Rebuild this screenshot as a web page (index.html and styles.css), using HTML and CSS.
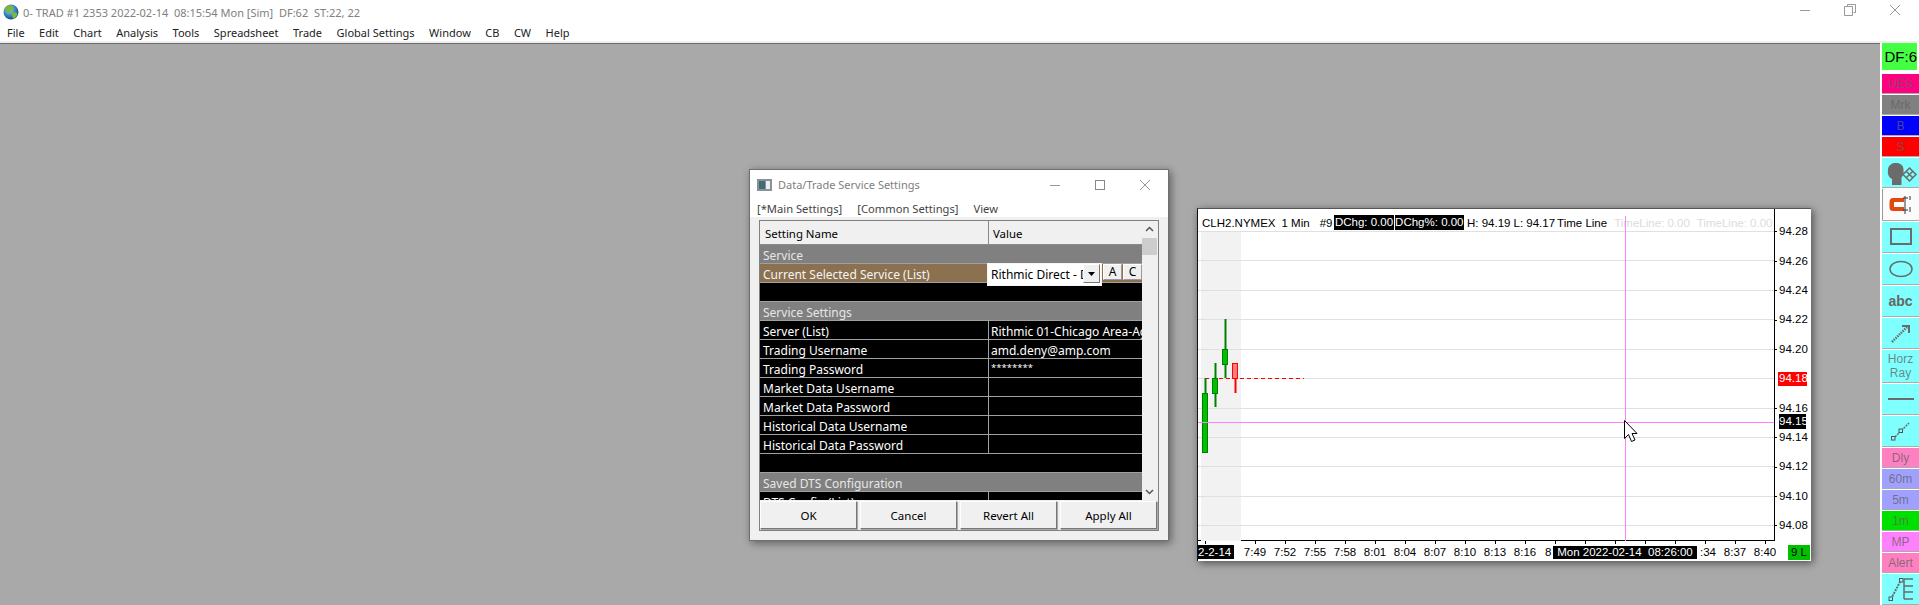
FILE: index.html
```html
<!DOCTYPE html>
<html lang="en">
<head>
<meta charset="utf-8">
<title>Sierra Chart</title>
<link rel="stylesheet" href="styles.css">
</head>
<body>
<div class="app">
  <header class="topbar">
    <div class="titlebar">
      <svg class="globe" viewBox="0 0 16 16" width="16" height="16">
        <defs><radialGradient id="gl" cx="40%" cy="35%" r="70%"><stop offset="0" stop-color="#9fd8f0"/><stop offset=".6" stop-color="#2f7fc0"/><stop offset="1" stop-color="#123f78"/></radialGradient></defs>
        <circle cx="8" cy="8" r="7.5" fill="url(#gl)"/>
        <path d="M4 2 C6 1 10 1.500 11 3.500 C11 5.500 8 6 7.500 8.500 C6.500 10 4 9 2.500 7 C2 5 2.500 3.500 4 2Z M9 9 C11 8 14 8 14.500 10 C13.500 12.500 12 14.500 10 15 C9.500 12.500 8.500 11 9 9Z" fill="#7db63c"/>
      </svg>
      <span class="title-text">0- TRAD #1 2353 2022-02-14&nbsp; 08:15:54 Mon [Sim]&nbsp; DF:62&nbsp; ST:22, 22</span>
      <div class="win-controls">
        <svg width="12" height="12" viewBox="0 0 12 12"><path d="M1 6.500H11" stroke="#999" fill="none"/></svg>
        <svg width="12" height="12" viewBox="0 0 12 12"><path d="M3.500 2.500V.5H11.500V8.500H9.500M.5 2.500H8.500V11.500H.5Z" stroke="#999" fill="none"/></svg>
        <svg width="12" height="12" viewBox="0 0 12 12"><path d="M1 1L11 11M11 1L1 11" stroke="#999" fill="none"/></svg>
      </div>
    </div>
    <nav class="menubar">
      <span>File</span><span>Edit</span><span>Chart</span><span>Analysis</span><span>Tools</span><span>Spreadsheet</span><span>Trade</span><span>Global Settings</span><span>Window</span><span>CB</span><span>CW</span><span>Help</span>
    </nav>
  </header>

  <main class="workspace">
    <section class="dialog">
      <div class="dlg-title">
        <svg class="dlg-icon" width="15" height="12" viewBox="0 0 15 12"><rect width="15" height="12" fill="#8a9096"/><rect x="2" y="2" width="6" height="8" fill="#3d6b78"/><rect x="9" y="2" width="4" height="8" fill="#e8eef2"/></svg>
        <span class="dlg-title-text">Data/Trade Service Settings</span>
        <div class="dlg-controls">
          <svg width="12" height="12" viewBox="0 0 12 12"><path d="M1 6.500H11" stroke="#999" fill="none"/></svg>
          <svg width="12" height="12" viewBox="0 0 12 12"><rect x="1.500" y="1.500" width="9" height="9" stroke="#888" fill="none"/></svg>
          <svg width="12" height="12" viewBox="0 0 12 12"><path d="M1 1L11 11M11 1L1 11" stroke="#999" fill="none"/></svg>
        </div>
      </div>
      <div class="dlg-menu"><span>[*Main Settings]</span><span>[Common Settings]</span><span>View</span></div>
      <div class="dlg-body">
        <div class="panel">
          <div class="panel-top">
            <div class="grid">
              <div class="row head"><span>Setting Name</span><span>Value</span></div>
              <div class="rows">
                <div class="row section"><span>Service</span></div>
                <div class="row current"><span>Current Selected Service (List)</span></div>
                <div class="row blank"></div>
                <div class="row section"><span>Service Settings</span></div>
                <div class="row"><span>Server (List)</span><span>Rithmic 01-Chicago Area-Agg</span></div>
                <div class="row"><span>Trading Username</span><span>amd.deny@amp.com</span></div>
                <div class="row"><span>Trading Password</span><span class="mask">********</span></div>
                <div class="row"><span>Market Data Username</span><span></span></div>
                <div class="row"><span>Market Data Password</span><span></span></div>
                <div class="row"><span>Historical Data Username</span><span></span></div>
                <div class="row"><span>Historical Data Password</span><span></span></div>
                <div class="row blank"></div>
                <div class="row section"><span>Saved DTS Configuration</span></div>
                <div class="row"><span>DTS Config (List)</span><span></span></div>
                <div class="combo">
                  <span class="combo-text">Rithmic Direct - Data</span>
                  <span class="combo-btn"><svg width="7" height="4" viewBox="0 0 7 4"><path d="M0 0H7L3.500 4Z" fill="#000"/></svg></span>
                </div>
                <span class="mini mini-a">A</span>
                <span class="mini mini-c">C</span>
              </div>
            </div>
            <div class="scrollbar">
              <svg width="15" height="17" viewBox="0 0 15 17"><path d="M4 10L7.500 6.500L11 10" stroke="#555" stroke-width="1.500" fill="none"/></svg>
              <div class="thumb"></div>
              <svg class="sb-down" width="15" height="17" viewBox="0 0 15 17"><path d="M4 7L7.500 10.500L11 7" stroke="#555" stroke-width="1.500" fill="none"/></svg>
            </div>
          </div>
          <div class="actions">
            <button>OK</button><button>Cancel</button><button>Revert All</button><button>Apply All</button>
          </div>
        </div>
      </div>
    </section>

    <section class="chart">
      <div class="chart-upper">
        <div class="plot">
          <div class="chart-head">
            <span class="h-sym">CLH2.NYMEX</span>
            <span class="h-tf">1 Min</span>
            <span class="h-num">#9</span>
            <span class="h-blk h-first">DChg: 0.00</span>
            <span class="h-blk">DChg%: 0.00</span>
            <span class="h-hi">H: 94.19</span>
            <span class="h-lo">L: 94.17</span>
            <span class="h-tl">Time Line</span>
            <span class="h-faint">TimeLine: 0.00</span>
            <span class="h-faint">TimeLine: 0.00</span>
            <span class="h-faint">T</span>
          </div>
          <svg class="plot-svg" width="576" height="310" viewBox="0 0 576 310">
            <rect x="3" y="0" width="40" height="310" fill="#f2f2f2"/>
            <g stroke="#e0e0e0" fill="none">
              <path d="M0 .5H576M0 29.500H576M0 59.500H576M0 88.500H576M0 118.500H576M0 147.500H576M0 177.500H576M0 206.500H576M0 235.500H576M0 265.500H576M0 294.500H576"/>
            </g>
            <path d="M7 147.500H106" stroke="#f00" stroke-dasharray="4 3" fill="none"/>
            <g stroke="#008000" fill="none">
              <path d="M7.500 147V162M17.500 132V176M27.500 88V147" stroke-width="2"/>
              <rect x="4.500" y="162.500" width="5" height="59" fill="#00c000"/>
              <rect x="14.500" y="147.500" width="5" height="15" fill="#00c000"/>
              <rect x="24.500" y="118.500" width="5" height="15" fill="#00c000"/>
            </g>
            <path d="M37.500 147V162" stroke="#f00" stroke-width="2" fill="none"/>
            <rect x="34.500" y="132.500" width="5" height="15" fill="#ff8080" stroke="#f00"/>
            <path d="M0 191.500H576" stroke="#ff80ff" fill="none"/>
            <path d="M427.500 -15V310" stroke="#ff80ff" fill="none"/>
            <path d="M426.500 189.500V207.500L430.500 203.500L433.500 210.500L437 209L434 202.500H439Z" fill="#fff" stroke="#000"/>
          </svg>
        </div>
        <div class="price-axis">
          <span>94.28</span><span>94.26</span><span>94.24</span><span>94.22</span><span>94.20</span><span class="p-red">94.18</span><span>94.16</span><span>94.14</span><span>94.12</span><span>94.10</span><span>94.08</span>
          <span class="p-cur">94.15</span>
        </div>
      </div>
      <div class="time-axis">
        <span class="t-date"><b>2-2-14</b></span>
        <span>7:49</span><span>7:52</span><span>7:55</span><span>7:58</span><span>8:01</span><span>8:04</span><span>8:07</span><span>8:10</span><span>8:13</span><span>8:16</span><span class="t-part">8</span><span></span><span></span><span></span><span></span><span class="t-clip">:34</span><span>8:37</span><span>8:40</span>
        <span class="t-badge">9 L</span>
        <span class="t-cur">Mon 2022-02-14&nbsp; 08:26:00</span>
      </div>
    </section>
  </main>

  <aside class="tools">
    <div class="tb df">DF:6</div>
    <div class="tb sm ues">UES</div>
    <div class="tb sm mrk">Mrk</div>
    <div class="tb sm buy">B</div>
    <div class="tb sm sell">S</div>
    <div class="tb cy face">
      <svg width="34" height="29" viewBox="0 0 34 29"><path d="M8 27V21C4 19 3.500 15 4 11C5 6 9 4.500 13 5C18 5.500 20 9 19.500 13C20 17 18 18 17.500 20V27Z" fill="#6b6b6b"/><path d="M22 20L29 13M22 13L29 20M25.500 10L32 16.500L25.500 23L19 16.500Z" stroke="#6b6b6b" stroke-width="1.500" fill="none"/></svg>
    </div>
    <div class="tb magnet">
      <svg width="26" height="20" viewBox="0 0 26 20"><path d="M16 3H5C2.500 3 1.500 5 1.500 7V12C1.500 15 3 16 5 16H16V12H6V7H16Z" fill="#e04a10"/><path d="M17 1V19M15 3H20M15 15H20M22 1V5M22 12V17" stroke="#333" fill="none"/></svg>
    </div>
    <div class="tb cy">
      <svg width="24" height="20" viewBox="0 0 24 20"><rect x="2" y="2" width="20" height="15" stroke="#6b6b6b" stroke-width="2" fill="none"/></svg>
    </div>
    <div class="tb cy">
      <svg width="26" height="20" viewBox="0 0 26 20"><ellipse cx="13" cy="10" rx="11" ry="7.500" stroke="#6b6b6b" stroke-width="1.500" fill="none"/></svg>
    </div>
    <div class="tb cy abc">abc</div>
    <div class="tb cy">
      <svg width="24" height="22" viewBox="0 0 24 22"><path d="M3 20L18 5" stroke="#6b6b6b" stroke-width="2.500" stroke-dasharray="1.500 1" fill="none"/><path d="M13 4H20V11" stroke="#6b6b6b" stroke-width="2" fill="none"/></svg>
    </div>
    <div class="tb cy ray">Horz<br>Ray</div>
    <div class="tb cy">
      <svg width="26" height="6" viewBox="0 0 26 6"><path d="M0 3H26" stroke="#6b6b6b" stroke-width="2" fill="none"/></svg>
    </div>
    <div class="tb cy">
      <svg width="22" height="20" viewBox="0 0 22 20"><path d="M3 18L19 2" stroke="#6b6b6b" stroke-width="1.500" stroke-dasharray="2 1" fill="none"/><rect x="1.500" y="15.500" width="3.500" height="3.500" fill="#80ffff" stroke="#555"/><rect x="9" y="8" width="3.500" height="3.500" fill="#80ffff" stroke="#555"/></svg>
    </div>
    <div class="tb sm dly">Dly</div>
    <div class="tb sm blu">60m</div>
    <div class="tb sm blu">5m</div>
    <div class="tb sm grn">1m</div>
    <div class="tb sm mp">MP</div>
    <div class="tb sm alert">Alert</div>
    <div class="tb cy">
      <svg width="26" height="26" viewBox="0 0 26 26"><path d="M3 23L13 4" stroke="#6b6b6b" stroke-width="2" stroke-dasharray="2 1" fill="none"/><rect x="1" y="21" width="3.500" height="3.500" fill="#80ffff" stroke="#555"/><rect x="11.500" y="2.500" width="3.500" height="3.500" fill="#80ffff" stroke="#555"/><path d="M16 3V23M16 3H25M16 10H25M16 16H25M16 23H25" stroke="#6b6b6b" stroke-width="1.500" fill="none"/></svg>
    </div>
  </aside>
</div>
</body>
</html>
```
FILE: styles.css
```css
* { box-sizing: border-box; }
html, body { margin: 0; padding: 0; }
body { width: 1919px; height: 605px; overflow: hidden; background: #fff; font-family: "Noto Sans", "Liberation Sans", sans-serif; font-size: 12px; color: #000; }

.app { display: grid; grid-template-columns: 1880px 39px; grid-template-rows: 43px 562px; height: 605px; background: #fff; }

/* top */
.topbar { grid-column: 1 / 3; border-bottom: 2px solid #f0f0f0; background: #fff; }
.titlebar { display: flex; align-items: center; height: 24px; padding: 0 0 0 3px; }
.globe { flex: none; }
.title-text { margin-left: 4px; color: #808080; font-size: 11px; }
.win-controls { margin-left: auto; display: flex; gap: 33px; padding-right: 18px; padding-bottom: 4px; }
.menubar { display: flex; gap: 14.5px; height: 17px; padding-left: 7px; line-height: 17px; color: #222; font-size: 11px; }

/* workspace */
.workspace { position: relative; background: #a9a9a9; border-top: 1px solid #696969; }

/* dialog */
.dialog { position: absolute; left: 749px; top: 125px; width: 420px; height: 372px; background: #f0f0f0; border: 1px solid #6f6f6f; box-shadow: 2px 2px 8px rgba(0,0,0,.45); display: flex; flex-direction: column; }
.dlg-title { display: flex; align-items: center; height: 30px; background: #fff; padding-left: 7px; }
.dlg-title-text { margin-left: 6px; color: #808080; font-size: 11px; }
.dlg-controls { margin-left: auto; display: flex; gap: 33px; padding-right: 17px; }
.dlg-menu { display: flex; gap: 15px; height: 18px; background: #fff; padding-left: 7px; line-height: 20px; color: #444; font-size: 11.2px; }
.dlg-body { flex: 1; padding: 3px 10px 9px 9px; }
.panel { width: 400px; height: 311px; border: 1px solid #808080; display: flex; flex-direction: column; }
.panel-top { display: flex; height: 279px; }
.grid { width: 382px; background: #000; overflow: hidden; }
.row { display: grid; grid-template-columns: 229px 1fr; height: 19px; border-bottom: 1px solid #a0a0a0; color: #fff; line-height: 21px; white-space: nowrap; overflow: hidden; }
.row span { padding-left: 3px; overflow: hidden; }
.row span:first-child { border-right: 1px solid #a0a0a0; }
.row span:nth-child(2) { padding-left: 2px; }
.row .mask { line-height: 17px; font-size: 9.5px; }
.row.head { height: 24px; background: #f0f0f0; color: #000; line-height: 26px; font-size: 11.4px; border-bottom: 1px solid #8a8a8a; }
.row.head span:first-child { padding-left: 5px; border-right-color: #8a8a8a; }
.row.head span:nth-child(2) { padding-left: 4px; }
.row.section { background: #808080; color: #e6e6e6; }
.row.section span:first-child { border-right: 0; grid-column: 1 / 3; }
.row.current { background: #8b714f; color: #f4f4f4; }
.row.current span:first-child { border-right: 0; }
.rows { position: relative; height: 255px; overflow: hidden; }
.combo { position: absolute; left: 227px; top: 18px; width: 115px; height: 23px; background: #fff; border: 1px solid #f4f4f4; display: flex; color: #000; line-height: 22px; }
.combo-text { width: 95px; padding-left: 3px; overflow: hidden; white-space: nowrap; }
.combo-btn { width: 17px; height: 19px; background: #f0f0f0; border: 1px solid; border-color: #fff #777 #777 #fff; display: flex; align-items: center; justify-content: center; }
.mini { position: absolute; top: 19px; width: 19px; height: 16px; background: #f0f0f0; border: 1px solid; border-color: #fff #999 #999 #fff; color: #000; text-align: center; line-height: 13px; }
.mini-a { left: 343px; }
.mini-c { left: 363px; }
.scrollbar { width: 15px; display: flex; flex-direction: column; background: #f0f0f0; }
.thumb { width: 15px; height: 17px; background: #cdcdcd; }
.sb-down { margin-top: auto; margin-bottom: 0; }
.actions { display: flex; gap: 3px; height: 29px; padding-top: 1px; }
.actions button { width: 97px; height: 28px; background: #f0f0f0; border: 1px solid; border-color: #fff #777 #777 #fff; box-shadow: 1px 1px 0 #aaa; font: 11.5px "Noto Sans", "Liberation Sans", sans-serif; color: #000; padding: 0; }

/* chart */
.chart { position: absolute; left: 1197px; top: 164px; width: 614px; height: 353px; background: #fff; border-top: 1px solid #555; border-left: 1px solid #111; box-shadow: 2px 2px 8px rgba(0,0,0,.55); display: flex; flex-direction: column; font-family: "Liberation Sans", sans-serif; font-size: 11.5px; }
.chart-upper { display: flex; height: 332px; }
.plot { width: 577px; border-right: 1px solid #000; border-bottom: 1px solid #000; }
.chart-head { display: flex; height: 22px; padding: 6px 0 0 4px; white-space: nowrap; overflow: hidden; line-height: 16px; }
.h-tf { margin-left: 6px; }
.h-num { margin-left: 10px; }
.h-blk { background: #000; color: #fff; margin-left: 1px; height: 15px; line-height: 15px; padding: 0 .5px; }
.h-first { margin-left: 2px; }
.h-hi { margin-left: 3px; }
.h-lo { margin-left: 3px; }
.h-tl { margin-left: 2px; }
.h-faint { color: #dcdcdc; margin-left: 7px; }
.plot-svg { display: block; overflow: visible; }
.price-axis { position: relative; flex: 1; display: flex; flex-direction: column; padding-top: 8.3px; }
.price-axis span { flex: none; height: 29.4px; line-height: 29.4px; padding-left: 4px; background: linear-gradient(#000, #000) left center / 2px 1px no-repeat; }
.price-axis .p-red { color: #fff; background: linear-gradient(#f00, #f00) 3px center / 29px 14px no-repeat; }
.price-axis .p-cur { position: absolute; left: 4px; top: 205px; width: 27px; height: 15px; line-height: 15px; padding: 0; background: #000; color: #fff; }
.time-axis { position: relative; display: flex; height: 20px; line-height: 22px; white-space: nowrap; }
.time-axis span { width: 30px; text-align: center; flex: none; background: linear-gradient(#000, #000) center top / 1px 3px no-repeat; }
.time-axis .t-date { width: 42px; text-align: left; background-position: 7px top; }
.t-date b { font-weight: 400; background: #000; color: #fff; padding: 1px 3px 1px 0; }
.time-axis .t-part { text-align: left; padding-left: 5px; }
.time-axis .t-clip { text-align: right; padding-right: 4px; }
.time-axis .t-badge { width: 22px; height: 15px; margin: 4px 0 0 8px; background: #00c000; line-height: 15px; }
.time-axis .t-cur { position: absolute; left: 355px; top: 5px; width: 144px; height: 13px; line-height: 13px; background: #000; color: #fff; }

/* tool column */
.tools { padding-left: 2px; background: #fff; display: flex; flex-direction: column; overflow: hidden; font-family: "Liberation Sans", sans-serif; }
.tb { flex: none; width: 37px; height: 30px; display: flex; align-items: center; justify-content: center; margin-bottom: 2px; box-shadow: 0 1px 0 #aaa; color: rgba(96,96,96,.75); font-size: 12px; }
.tb.sm { height: 19px; }
.tb.df { width: 35px; height: 27px; margin-bottom: 4px; background: #44ff44; color: #000; font-size: 15px; box-shadow: none; justify-content: flex-end; }
.ues { background: #ff0080; }
.mrk { background: #808080; }
.buy { background: #0000ff; }
.sell { background: #ff0000; }
.cy { background: #80ffff; }
.tb.face { height: 29px; }
.tb.magnet { height: 31px; background: #fbfbfb; border-left: 1px solid #999; }
.tb.abc { font-weight: 700; font-size: 14px; color: #666; }
.tb.ray { height: 32px; text-align: center; line-height: 14px; }
.dly, .alert { background: #ff80c0; }
.blu { background: #a0a0ff; }
.grn { background: #00e000; }
.mp { background: #ff80ff; }
```
